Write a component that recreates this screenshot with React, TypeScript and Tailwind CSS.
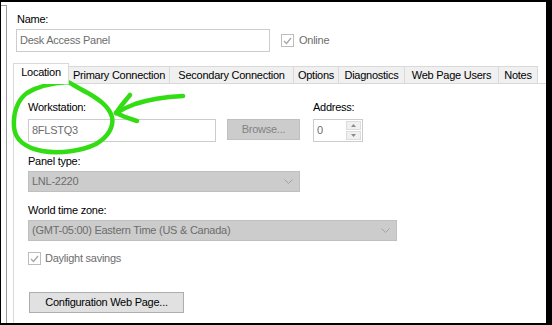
import React from "react";

const tabs = [
  { label: "Location", w: "w-[56px]", active: true },
  { label: "Primary Connection", w: "w-[101px]" },
  { label: "Secondary Connection", w: "w-[124px]" },
  { label: "Options", w: "w-[45px]" },
  { label: "Diagnostics", w: "w-[66px]" },
  { label: "Web Page Users", w: "w-[94px]" },
  { label: "Notes", w: "w-[39px]" },
];

function Check() {
  return (
    <div className="w-[13px] h-[13px] border border-[#bcbcbc] bg-white flex items-center justify-center shrink-0">
      <svg width="9" height="8" viewBox="0 0 9 8">
        <path d="M1 4 L3.5 6.5 L8 1" fill="none" stroke="#a6a6a6" strokeWidth="1.3" />
      </svg>
    </div>
  );
}

function Chevron() {
  return (
    <svg width="9" height="5" viewBox="0 0 9 5" className="shrink-0">
      <path d="M0.5 0.5 L4.5 4.5 L8.5 0.5" fill="none" stroke="#a2a2a2" strokeWidth="1" />
    </svg>
  );
}

function Field(props: { text: string; w: string }) {
  return (
    <div className={"h-[23px] border border-[#cccccc] bg-white pl-[3px] flex items-center text-[#6d6d6d] " + props.w}>
      {props.text}
    </div>
  );
}

function Combo(props: { text: string; w: string }) {
  return (
    <div className={"h-[21px] border border-[#bfbfbf] bg-[#cccccc] pl-[3px] pr-[6px] flex items-center justify-between text-[#6d6d6d] " + props.w}>
      <span>{props.text}</span>
      <Chevron />
    </div>
  );
}

function Spin() {
  return (
    <div className="w-[50px] h-[23px] border border-[#cccccc] bg-white flex">
      <div className="flex-1 pl-[3px] flex items-center text-[#6d6d6d]">0</div>
      <div className="w-[16px] flex flex-col gap-[1px] pr-[1px] py-[1px]">
        <div className="flex-1 bg-[#f0f0f0] border border-[#dcdcdc] flex items-center justify-center">
          <svg width="5" height="3" viewBox="0 0 5 3">
            <path d="M0 3 L2.5 0 L5 3 Z" fill="#8a8a8a" />
          </svg>
        </div>
        <div className="flex-1 bg-[#f0f0f0] border border-[#dcdcdc] flex items-center justify-center">
          <svg width="5" height="3" viewBox="0 0 5 3">
            <path d="M0 0 L2.5 3 L5 0 Z" fill="#8a8a8a" />
          </svg>
        </div>
      </div>
    </div>
  );
}

export default function App() {
  return (
    <div className="relative w-[552px] h-[325px] bg-black pt-[2px] pl-[1px] pr-[6px] pb-[2px] overflow-hidden font-['Liberation_Sans',Arial,sans-serif] text-[11px] leading-[13px] tracking-[-0.25px] text-black">
      <div className="flex h-full bg-white overflow-hidden">
        <div className="w-[6px] mt-[3px] border-t border-r border-[#9a9a9a] shrink-0" />
        <div className="flex-1 flex flex-col overflow-hidden">
          <div className="pl-[9px] pt-[11px]">
            <div className="ml-[1px]">Name:</div>
            <div className="flex items-center mt-[3px]">
              <Field text="Desk Access Panel" w="w-[254px]" />
              <div className="ml-[11px] flex items-center gap-[5px] text-[#6d6d6d]">
                <Check />
                <span>Online</span>
              </div>
            </div>
          </div>

          <div className="mt-[11px] pl-[6px] flex items-end h-[20px]">
            {tabs.map((t) =>
              t.active ? (
                <div
                  key={t.label}
                  className={"relative z-10 h-[21px] -mb-[1px] bg-white border border-b-0 border-[#d9d9d9] flex justify-center pt-[2px] " + t.w}
                >
                  {t.label}
                </div>
              ) : (
                <div
                  key={t.label}
                  className={"h-[17px] bg-[#f0f0f0] border-t border-r border-[#d9d9d9] flex items-center justify-center " + t.w}
                >
                  {t.label}
                </div>
              )
            )}
          </div>

          <div className="flex-1 ml-[6px] w-[560px] shrink-0 border-t border-l border-[#d9d9d9] pl-[14px] pt-[17px]">
            <div className="flex items-start">
              <div className="w-[188px]">
                <div>Workstation:</div>
                <div className="mt-[5px]">
                  <Field text="8FLSTQ3" w="w-[188px]" />
                </div>
              </div>
              <div className="ml-[11px] mt-[18px] w-[73px] h-[21px] bg-[#cccccc] border border-[#bfbfbf] flex items-center justify-center text-[#838383]">
                Browse...
              </div>
              <div className="ml-[13px]">
                <div>Address:</div>
                <div className="mt-[5px]">
                  <Spin />
                </div>
              </div>
            </div>

            <div className="mt-[13px]">Panel type:</div>
            <div className="mt-[3px]">
              <Combo text="LNL-2220" w="w-[272px]" />
            </div>

            <div className="mt-[12px]">World time zone:</div>
            <div className="mt-[3px]">
              <Combo text="(GMT-05:00) Eastern Time (US & Canada)" w="w-[369px]" />
            </div>

            <div className="mt-[11px] flex items-center gap-[4px] text-[#6d6d6d]">
              <Check />
              <span>Daylight savings</span>
            </div>

            <div className="mt-[27px] ml-[1px] w-[155px] h-[21px] bg-[#e1e1e1] border border-[#adadad] flex items-center justify-center">
              Configuration Web Page...
            </div>
          </div>
        </div>
      </div>

      <svg className="absolute left-0 top-0 pointer-events-none" width="552" height="325" viewBox="0 0 552 325">
        <g fill="none" stroke="#33dd14" strokeWidth="4.5" strokeLinecap="round" strokeLinejoin="round">
          <path d="M68 82 C52 83 38 86 27 93 C17 100 13 114 14 127 C15 140 26 148 42 151 C60 154 82 151 96 144 C108 137 114 127 112 117 C109 106 98 99 88 93 C80 89 74 85 68 82" />
          <path d="M183 96 C165 97 150 99 135 104 C127 107 121 110 116 113" />
          <path d="M130 95 C125 101 120 107 116 113 C122 116 130 119 137 121" />
        </g>
      </svg>
    </div>
  );
}
